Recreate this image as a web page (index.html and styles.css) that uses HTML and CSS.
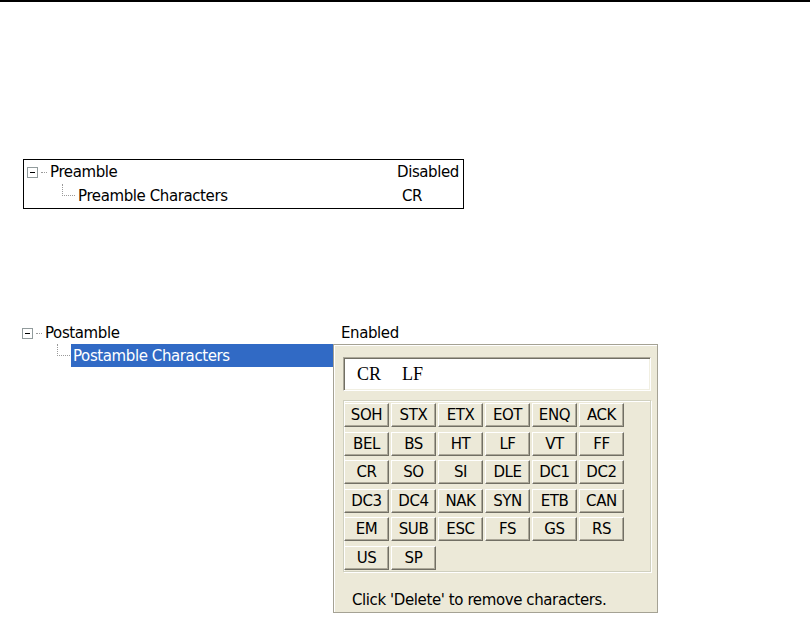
FILE: index.html
```html
<!DOCTYPE html>
<html>
<head>
<meta charset="utf-8">
<title>Preamble / Postamble</title>
<link rel="stylesheet" href="styles.css">
</head>
<body>
<div class="rule"></div>

<div class="pre">
  <div class="row">
    <div class="name">
      <svg class="exp" width="11" height="11" viewBox="0 0 11 11"><rect x="0.5" y="0.5" width="10" height="10" fill="#fff" stroke="#919b9c"/><path d="M3 5.5h5" stroke="#000"/></svg>
      <span class="hdots"></span>
      <span class="label">Preamble</span>
    </div>
    <div class="val">Disabled</div>
  </div>
  <div class="row">
    <div class="name">
      <span class="elbow"></span>
      <span class="label child">Preamble Characters</span>
    </div>
    <div class="val cr">CR</div>
  </div>
</div>

<div class="post">
  <div class="name top">
    <svg class="exp" width="11" height="11" viewBox="0 0 11 11"><rect x="0.5" y="0.5" width="10" height="10" fill="#fff" stroke="#919b9c"/><path d="M3 5.5h5" stroke="#000"/></svg>
    <span class="hdots"></span>
    <span class="label">Postamble</span>
  </div>
  <div class="val topval">Enabled</div>
  <div class="name sub">
    <span class="elbow"></span>
    <span class="sel">Postamble Characters</span>
  </div>
  <div class="panel">
    <div class="field">CR  LF</div>
    <div class="group">
      <div class="btn">SOH</div><div class="btn">STX</div><div class="btn">ETX</div><div class="btn">EOT</div><div class="btn">ENQ</div><div class="btn">ACK</div>
      <div class="btn">BEL</div><div class="btn">BS</div><div class="btn">HT</div><div class="btn">LF</div><div class="btn">VT</div><div class="btn">FF</div>
      <div class="btn">CR</div><div class="btn">SO</div><div class="btn">SI</div><div class="btn">DLE</div><div class="btn">DC1</div><div class="btn">DC2</div>
      <div class="btn">DC3</div><div class="btn">DC4</div><div class="btn">NAK</div><div class="btn">SYN</div><div class="btn">ETB</div><div class="btn">CAN</div>
      <div class="btn">EM</div><div class="btn">SUB</div><div class="btn">ESC</div><div class="btn">FS</div><div class="btn">GS</div><div class="btn">RS</div>
      <div class="btn">US</div><div class="btn">SP</div>
    </div>
    <div class="hint">Click 'Delete' to remove characters.</div>
  </div>
</div>
</body>
</html>
```

FILE: styles.css
```css
* { box-sizing: border-box; }

body {
  margin: 0;
  background: #fff;
  color: #000;
  font-family: "DejaVu Sans", sans-serif;
  font-size: 15px;
  letter-spacing: -0.4px;
}

.rule {
  height: 2px;
  background: #000;
}

/* Preamble boxed tree */
.pre {
  margin: 157px 0 0 23px;
  width: 441px;
  border: 1px solid #000;
}

.pre .row {
  display: grid;
  grid-template-columns: 373px 1fr;
  height: 24px;
}

.name {
  display: flex;
  align-items: center;
}

.pre .name { padding-left: 3px; }

.val {
  display: flex;
  align-items: center;
}

.cr { padding-left: 5px; }

.exp {
  flex: none;
  display: block;
}

.hdots {
  width: 6px;
  margin: 0 3px;
  border-top: 1px dotted #9a9a9a;
  height: 0;
}

.elbow {
  flex: none;
  align-self: flex-start;
  width: 13px;
  height: 12px;
  margin-left: 35px;
  border-left: 1px dotted #9a9a9a;
  border-bottom: 1px dotted #9a9a9a;
}

.label.child { padding-left: 3px; }

/* Postamble tree */
.post {
  margin: 113px 0 0 18px;
  display: grid;
  grid-template-columns: 315px 325px;
  grid-template-rows: 22px auto;
}

.post .name { padding-left: 4px; }

.top { height: 22px; }

.topval { padding-left: 8px; }

.sub {
  align-self: start;
  height: 23px;
  align-items: stretch !important;
}

.sel {
  flex: 1;
  margin-left: 1px;
  padding-left: 2px;
  background: #316AC5;
  color: #fff;
  display: flex;
  align-items: center;
}

/* Character picker dropdown */
.panel {
  background: #ECE9D8;
  border: 1px solid #A5A294;
  box-shadow: inset 1px 1px 0 #fff;
  padding: 12px 6px 3px 9px;
}

.field {
  height: 34px;
  background: #fff;
  border: 1px solid;
  border-color: #ACA899 #fff #fff #ACA899;
  box-shadow: inset 1px 1px 0 #716F64, inset -1px -1px 0 #F1EFE2;
  font-family: "Liberation Serif", serif;
  font-size: 18px;
  letter-spacing: 0;
  word-spacing: 6px;
  padding-left: 13px;
  display: flex;
  align-items: center;
  white-space: pre;
}

.group {
  margin-top: 9px;
  height: 172px;
  border: 1px solid #D0D0BF;
  box-shadow: inset 1px 1px 0 #fff, 1px 1px 0 #fff;
  padding: 2px 0;
  display: grid;
  grid-template-columns: repeat(6, 45px);
  grid-auto-rows: 24px;
  column-gap: 2px;
  row-gap: 4.5px;
  align-content: start;
}

.btn {
  background: #ECE9D8;
  border: 1px solid;
  border-color: #fff #716F64 #716F64 #fff;
  box-shadow: inset -1px -1px 0 #ACA899;
  display: flex;
  align-items: center;
  justify-content: center;
}

.hint {
  margin-top: 19px;
  height: 18px;
  line-height: 18px;
  padding-left: 9px;
}
```
